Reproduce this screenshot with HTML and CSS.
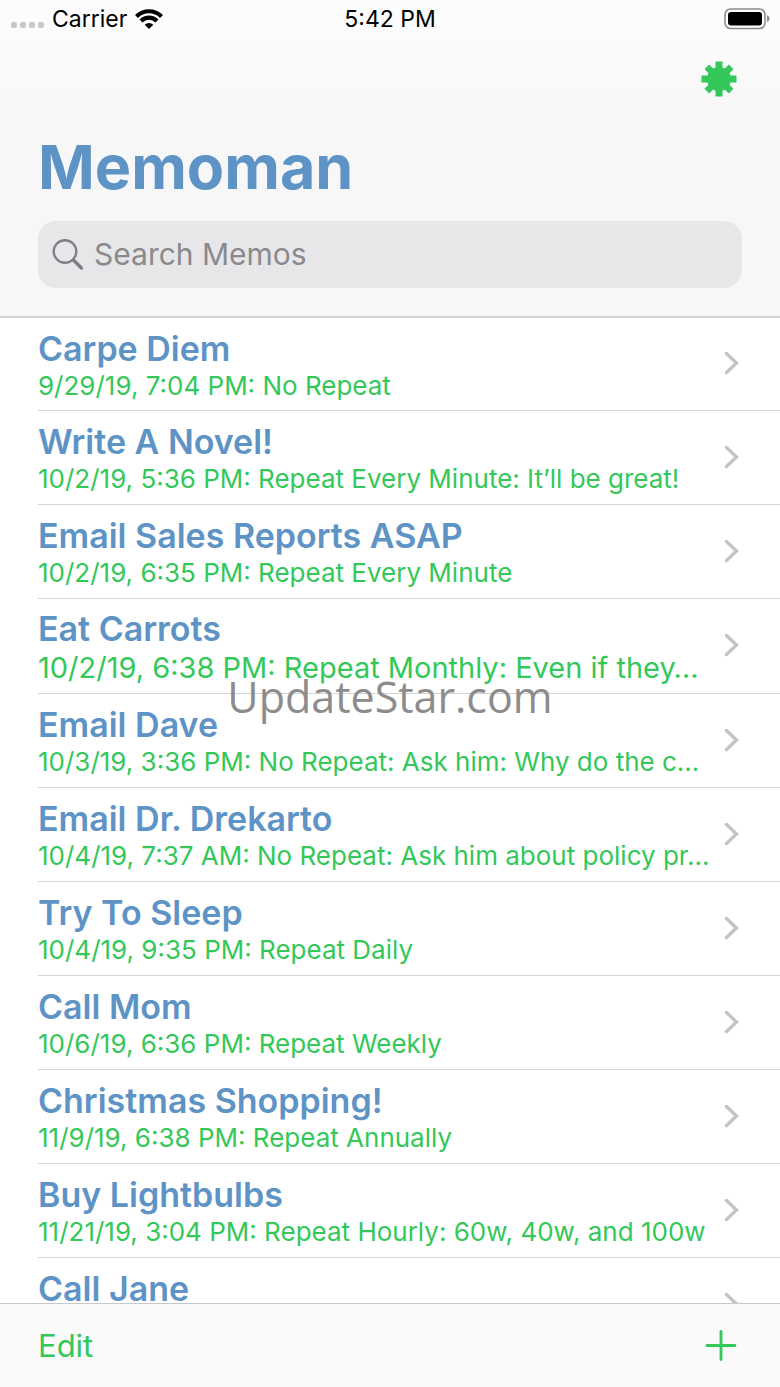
FILE: index.html
```html
<!DOCTYPE html>
<html lang="en">
<head>
<meta charset="utf-8">
<meta name="viewport" content="width=device-width, initial-scale=1">
<title>Memoman</title>
<link rel="stylesheet" href="styles.css">
</head>
<body>
<svg class="defs" aria-hidden="true">
  <symbol id="chevron" viewBox="0 0 16 24"><path d="M2.5 1.500 12.5 11 2.5 20.500" fill="none" stroke="#c4c4c6" stroke-width="3.400" stroke-linecap="round" stroke-linejoin="miter"/></symbol>
</svg>
<header class="header">
  <div class="status">
    <div class="carrier">
      <span class="signal"><i></i><i></i><i></i><i></i></span>
      <span>Carrier</span>
      <svg class="wifi" width="28" height="20" viewBox="0 0 28 20" aria-hidden="true">
        <g fill="none" stroke="#000" stroke-width="4.200"><path d="M1.500 7.400a17.700 17.700 0 0 1 25 0"/><path d="M6 12a11.300 11.300 0 0 1 16 0"/></g>
        <path d="M14 20 9.700 15.700a6.100 6.100 0 0 1 8.600 0z"/>
      </svg>
    </div>
    <time class="clock">5:42 PM</time>
    <div class="power">
      <svg width="46" height="22" viewBox="0 0 46 22" aria-hidden="true">
        <rect x="1" y="1" width="40" height="19.500" rx="5.500" fill="#fff" stroke="#8c8c8c" stroke-width="1.600"/>
        <rect x="4" y="4" width="34" height="13.500" rx="3"/>
        <path d="M43 7.300c3.400 1.200 3.400 5.600 0 6.800z" fill="#8c8c8c"/>
      </svg>
    </div>
  </div>
  <div class="actions">
    <button class="icon-button" type="button" aria-label="Settings">
      <svg width="36" height="36" viewBox="-18 -18 36 36" fill="#34c759" aria-hidden="true">
        <circle r="12"/>
        <path d="M-3.500-17.500h7v35h-7zM-17.500-3.500h35v7h-35z"/>
        <path transform="rotate(45)" d="M-3.300-17.200h6.600v34.400h-6.600zM-17.200-3.300h34.400v6.600h-34.400z"/>
      </svg>
    </button>
  </div>
  <h1 class="title">Memoman</h1>
  <label class="search">
    <svg width="32" height="32" viewBox="0 0 32 32" fill="none" stroke="#7f7f83" aria-hidden="true"><circle cx="13" cy="12.500" r="11.300" stroke-width="2.400"/><path d="m21.400 21 8 8" stroke-width="3.400" stroke-linecap="round"/></svg>
    <input type="search" placeholder="Search Memos" aria-label="Search Memos">
  </label>
</header>
<main class="content">
  <ul class="memos">
    <li class="memo"><div class="text"><h2>Carpe Diem</h2><p>9/29/19, 7:04 PM: No Repeat</p></div><svg class="chevron"><use href="#chevron"/></svg></li>
    <li class="memo"><div class="text"><h2>Write A Novel!</h2><p>10/2/19, 5:36 PM: Repeat Every Minute: It’ll be great!</p></div><svg class="chevron"><use href="#chevron"/></svg></li>
    <li class="memo"><div class="text"><h2>Email Sales Reports ASAP</h2><p>10/2/19, 6:35 PM: Repeat Every Minute</p></div><svg class="chevron"><use href="#chevron"/></svg></li>
    <li class="memo large"><div class="text"><h2>Eat Carrots</h2><p>10/2/19, 6:38 PM: Repeat Monthly: Even if they…</p></div><svg class="chevron"><use href="#chevron"/></svg></li>
    <li class="memo"><div class="text"><h2>Email Dave</h2><p>10/3/19, 3:36 PM: No Repeat: Ask him: Why do the c…</p></div><svg class="chevron"><use href="#chevron"/></svg></li>
    <li class="memo"><div class="text"><h2>Email Dr. Drekarto</h2><p>10/4/19, 7:37 AM: No Repeat: Ask him about policy pr…</p></div><svg class="chevron"><use href="#chevron"/></svg></li>
    <li class="memo"><div class="text"><h2>Try To Sleep</h2><p>10/4/19, 9:35 PM: Repeat Daily</p></div><svg class="chevron"><use href="#chevron"/></svg></li>
    <li class="memo"><div class="text"><h2>Call Mom</h2><p>10/6/19, 6:36 PM: Repeat Weekly</p></div><svg class="chevron"><use href="#chevron"/></svg></li>
    <li class="memo"><div class="text"><h2>Christmas Shopping!</h2><p>11/9/19, 6:38 PM: Repeat Annually</p></div><svg class="chevron"><use href="#chevron"/></svg></li>
    <li class="memo"><div class="text"><h2>Buy Lightbulbs</h2><p>11/21/19, 3:04 PM: Repeat Hourly: 60w, 40w, and 100w</p></div><svg class="chevron"><use href="#chevron"/></svg></li>
    <li class="memo"><div class="text"><h2>Call Jane</h2></div><svg class="chevron"><use href="#chevron"/></svg></li>
  </ul>
</main>
<footer class="toolbar">
  <button class="edit" type="button">Edit</button>
  <button class="icon-button" type="button" aria-label="Add memo">
    <svg width="32" height="32" viewBox="0 0 32 32" fill="none" stroke="#34c759" stroke-width="2.800" stroke-linecap="round" aria-hidden="true"><path d="M16 1.500v28M2 15.500h28"/></svg>
  </button>
</footer>
<div class="watermark">UpdateStar.com</div>
</body>
</html>
```
FILE: styles.css
```css
* { box-sizing: border-box; margin: 0; padding: 0; }
body {
  position: relative;
  display: flex;
  flex-direction: column;
  height: 100vh;
  overflow: hidden;
  background: #fff;
  color: #000;
  font-family: Inter, "Liberation Sans", sans-serif;
}
button { border: 0; background: none; font: inherit; color: #34c759; }
svg { display: block; flex: none; }
.defs { position: absolute; width: 0; height: 0; }

.header {
  flex: none;
  padding: 0 38px 28px;
  background: linear-gradient(#fdfdfd, #f7f7f8 40%);
  border-bottom: 2px solid #d2d2d4;
}
.status {
  display: grid;
  grid-template-columns: 1fr auto 1fr;
  align-items: center;
  height: 38px;
  margin: 0 -28px;
  font-size: 23px;
  line-height: 28px;
}
.carrier { display: flex; align-items: center; gap: 8px; }
.signal { display: flex; gap: 3px; padding: 12px 0 0 1px; }
.signal i { width: 6px; height: 6px; border-radius: 2px; background: #c8c8c8; }
.power { display: flex; justify-content: flex-end; }
.actions { display: flex; justify-content: flex-end; padding: 23px 5px 0 0; }
.title {
  padding-top: 31px;
  font-size: 61px;
  line-height: 78px;
  font-weight: 700;
  color: #5e93c6;
}
.search {
  display: flex;
  align-items: center;
  gap: 10px;
  height: 67px;
  margin-top: 15px;
  padding: 0 14px;
  border-radius: 18px;
  background: #e7e7e9;
}
.search input {
  flex: 1;
  min-width: 0;
  padding-bottom: 2px;
  border: 0;
  outline: 0;
  background: none;
  font: inherit;
  font-size: 30px;
  line-height: 40px;
}
.search input::placeholder { color: #8a8a8e; opacity: 1; }

.content { flex: 1; min-height: 0; overflow: hidden; }
.memos { list-style: none; padding-left: 38px; }
.memo {
  display: flex;
  align-items: center;
  height: 94px;
  padding-right: 40px;
  border-bottom: 1px solid #d4d4d6;
}
.memo:first-child { height: 93px; }
.memo.large { height: 95px; }
.text { flex: 1; min-width: 0; align-self: flex-start; padding-top: 10px; }
.memo h2 {
  font-size: 34px;
  line-height: 42px;
  font-weight: 600;
  color: #5e93c6;
  white-space: nowrap;
}
.memo p {
  font-size: 26px;
  line-height: 32px;
  color: #34c759;
  white-space: nowrap;
}
.memo.large .text { padding-top: 9px; }
.memo.large p { font-size: 29px; line-height: 36px; }
.chevron { width: 16px; height: 24px; }

.toolbar {
  flex: none;
  display: flex;
  align-items: center;
  justify-content: space-between;
  height: 84px;
  padding: 0 43px 0 38px;
  border-top: 1px solid #c8c8ca;
  background: #fafafa;
}
.edit { font-size: 31px; line-height: 40px; }

.watermark {
  position: absolute;
  top: 50%;
  left: 50%;
  transform: translate(-50%, -50%);
  padding-top: 5px;
  font-family: "Open Sans", "Noto Sans", sans-serif;
  font-size: 43px;
  line-height: 60px;
  color: #8c8c8c;
  pointer-events: none;
}
```
